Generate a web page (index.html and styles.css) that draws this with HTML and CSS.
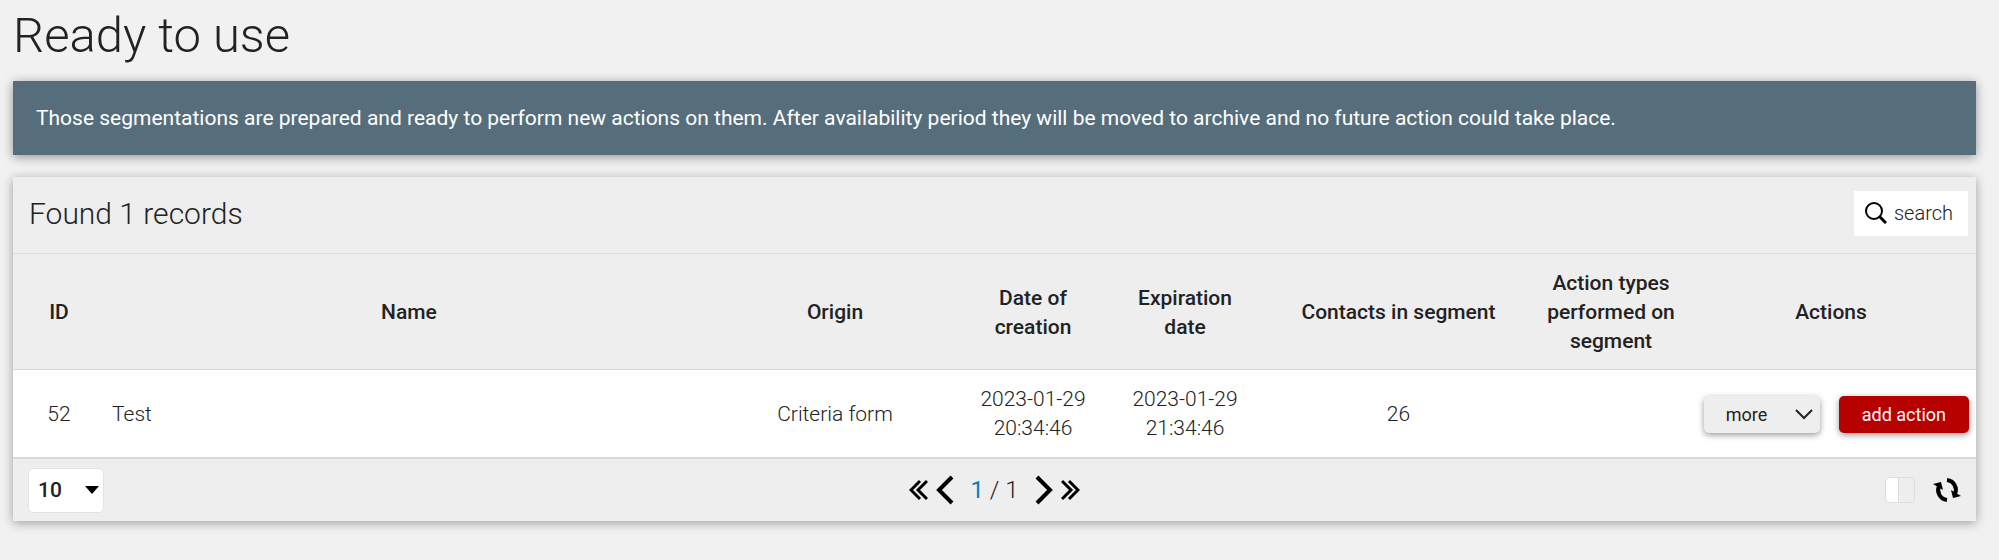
FILE: index.html
```html
<!DOCTYPE html>
<html lang="en">
<head>
    <meta charset="UTF-8">
    <meta name="viewport" content="width=device-width, initial-scale=1.0">
    <title>Ready to use</title>
    <link rel="stylesheet" href="styles.css">
</head>
<body>
    <h1>Ready to use</h1>

    <div class="info-box">
        Those segmentations are prepared and ready to perform new actions on them. After availability period they will be moved to archive and no future action could take place.
    </div>

    <div class="grid-box">
        <div class="grid-header">
            <h2>Found 1 records</h2>
            <button type="button" class="search-btn">
                <svg width="22" height="22" viewBox="0 0 22 22" fill="none" stroke="#000">
                    <circle cx="9" cy="9" r="8" stroke-width="2"/>
                    <path d="M14 14l7 7" stroke-width="3"/>
                </svg>
                search
            </button>
        </div>

        <table class="grid">
            <colgroup>
                <col class="col-id">
                <col>
                <col class="col-origin">
                <col class="col-date">
                <col class="col-date">
                <col class="col-contacts">
                <col class="col-types">
                <col class="col-actions">
            </colgroup>
            <thead>
                <tr>
                    <th>ID</th>
                    <th>Name</th>
                    <th>Origin</th>
                    <th>Date of creation</th>
                    <th>Expiration date</th>
                    <th>Contacts in segment</th>
                    <th>Action types performed on segment</th>
                    <th>Actions</th>
                </tr>
            </thead>
            <tbody>
                <tr>
                    <td>52</td>
                    <td class="name">Test</td>
                    <td>Criteria form</td>
                    <td>2023-01-29 20:34:46</td>
                    <td>2023-01-29 21:34:46</td>
                    <td>26</td>
                    <td></td>
                    <td>
                        <div class="actions">
                            <button type="button" class="btn btn-more">
                                more
                                <svg width="18" height="12" viewBox="0 0 18 12" fill="none" stroke="#222" stroke-width="2">
                                    <path d="M1 2l8 8 8-8"/>
                                </svg>
                            </button>
                            <button type="button" class="btn btn-add">add action</button>
                        </div>
                    </td>
                </tr>
            </tbody>
        </table>

        <div class="grid-footer">
            <div class="page-size">
                <select aria-label="Records per page">
                    <option>10</option>
                    <option>25</option>
                    <option>50</option>
                </select>
            </div>

            <div class="pager">
                <button type="button" aria-label="First page">
                    <svg width="19" height="22" viewBox="0 0 19 22" fill="none" stroke="#000" stroke-width="3">
                        <path d="M11 2L2 11l9 9M18 2L9 11l9 9"/>
                    </svg>
                </button>
                <button type="button" aria-label="Previous page">
                    <svg width="18" height="30" viewBox="0 0 18 30" fill="none" stroke="#000" stroke-width="4">
                        <path d="M16 2L3 15l13 13"/>
                    </svg>
                </button>
                <span class="pages"><a href="#">1</a> / 1</span>
                <button type="button" aria-label="Next page">
                    <svg width="18" height="30" viewBox="0 0 18 30" fill="none" stroke="#000" stroke-width="4">
                        <path d="M2 2l13 13L2 28"/>
                    </svg>
                </button>
                <button type="button" aria-label="Last page">
                    <svg width="19" height="22" viewBox="0 0 19 22" fill="none" stroke="#000" stroke-width="3">
                        <path d="M8 2l9 9-9 9M1 2l9 9-9 9"/>
                    </svg>
                </button>
            </div>

            <div class="tools">
                <input type="checkbox" class="toggle" aria-label="Auto refresh">
                <button type="button" aria-label="Refresh">
                    <svg width="28" height="26" viewBox="0 0 28 26">
                        <path d="M14 3a10 10 0 0 1 8 14" fill="none" stroke="#000" stroke-width="4"/>
                        <path d="M18 13l2 8 8-2z"/>
                        <path d="M14 23a10 10 0 0 1-8-14" fill="none" stroke="#000" stroke-width="4"/>
                        <path d="M10 13L8 5 0 7z"/>
                    </svg>
                </button>
            </div>
        </div>
    </div>
</body>
</html>
```

FILE: styles.css
```css
* {
    box-sizing: border-box;
}

body {
    margin: 0;
    padding: 0 23px 38px 13px;
    background-color: #f1f1f1;
    color: #222;
    font-family: Roboto, sans-serif;
    font-size: 21px;
    font-weight: 300;
    line-height: 29px;
}

h1 {
    margin: 0;
    padding: 6px 0 15px;
    font-size: 49px;
    font-weight: 300;
    line-height: 60px;
}

button {
    padding: 0;
    border: none;
    background: none;
    color: inherit;
    font: inherit;
    cursor: pointer;
}

svg {
    display: block;
}

.info-box {
    padding: 23px 23px 22px;
    background-color: #566e7b;
    color: #fff;
    font-weight: 400;
    box-shadow: 0 2px 10px rgba(0, 0, 0, 0.4);
}

.grid-box {
    margin-top: 22px;
    background-color: #eee;
    box-shadow: 0 2px 10px rgba(0, 0, 0, 0.35);
}

.grid-header {
    display: flex;
    align-items: center;
    justify-content: space-between;
    height: 77px;
    padding: 0 8px 4px 16px;
    border-bottom: 1px solid #ddd;
}

.grid-header h2 {
    margin: 0;
    font-size: 30px;
    font-weight: 300;
}

.search-btn {
    display: flex;
    align-items: center;
    gap: 7px;
    height: 45px;
    padding: 0 15px 0 11px;
    background-color: #fff;
    font-size: 20px;
}

.grid {
    width: 100%;
    table-layout: fixed;
    border-collapse: collapse;
}

.col-id {
    width: 92px;
}

.col-origin {
    width: 244px;
}

.col-date {
    width: 152px;
}

.col-contacts {
    width: 275px;
}

.col-types {
    width: 150px;
}

.col-actions {
    width: 290px;
}

.grid th,
.grid td {
    padding: 15px 7px 14px;
    text-align: center;
}

.grid th {
    padding-bottom: 13px;
    font-weight: 500;
    border-bottom: 1px solid #d8d8d8;
}

.grid td {
    background-color: #fff;
    border-bottom: 2px solid #d8d8d8;
}

.grid .name {
    text-align: left;
}

.actions {
    display: flex;
    justify-content: flex-end;
    gap: 19px;
}

.btn {
    display: flex;
    align-items: center;
    height: 37px;
    border-radius: 5px;
    font-size: 18px;
    font-weight: 400;
    box-shadow: 0 2px 6px rgba(0, 0, 0, 0.4);
}

.btn-more {
    justify-content: space-between;
    width: 116px;
    padding: 0 7px 0 22px;
    background-color: #eee;
}

.btn-add {
    padding: 0 23px;
    background-color: #b70000;
    color: #fff;
}

.grid-footer {
    display: grid;
    grid-template-columns: 1fr auto 1fr;
    align-items: center;
    height: 62px;
    padding: 0 15px;
}

.page-size {
    display: grid;
    justify-content: start;
    align-items: center;
}

.page-size select,
.page-size::after {
    grid-area: 1 / 1;
}

.page-size select {
    width: 76px;
    height: 45px;
    padding: 0 9px;
    border: 1px solid #e3e3e3;
    border-radius: 5px;
    appearance: none;
    background-color: #fff;
    color: #222;
    font: inherit;
    font-weight: 500;
}

.page-size::after {
    content: "";
    justify-self: end;
    margin-right: 5px;
    border: 7px solid transparent;
    border-top: 8px solid #000;
    border-bottom: none;
    pointer-events: none;
}

.pager {
    display: flex;
    align-items: center;
    gap: 8px;
}

.pages {
    padding: 0 8px;
    font-size: 24px;
}

.pages a {
    color: #0082c8;
    font-weight: 400;
    text-decoration: none;
}

.tools {
    display: flex;
    align-items: center;
    justify-content: flex-end;
    gap: 18px;
}

.toggle {
    width: 30px;
    height: 26px;
    margin: 0;
    border: 1px solid #ddd;
    border-radius: 4px;
    appearance: none;
    background: linear-gradient(to right, #fff 12px, #ddd 12px, #ddd 13px, #eee 13px);
}
```
